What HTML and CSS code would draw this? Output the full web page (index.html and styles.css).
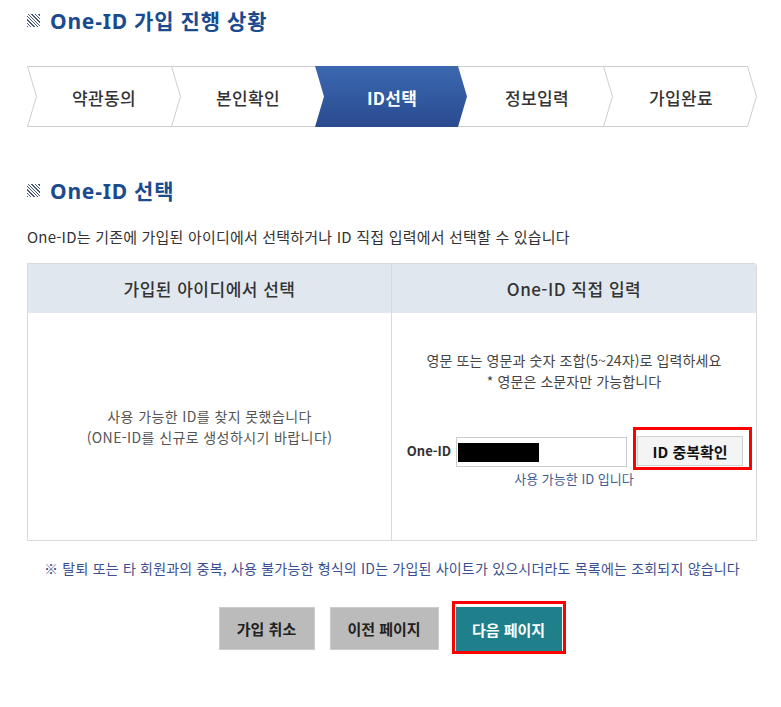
FILE: index.html
```html
<!DOCTYPE html>
<html lang="ko">
<head>
    <meta charset="UTF-8">
    <title>One-ID 선택</title>
    <link rel="stylesheet" href="styles.css">
</head>
<body>
    <div class="page">
        <!-- 진행 상황 -->
        <h2 class="sec-title"><span class="hatch"></span>One-ID 가입 진행 상황</h2>

        <svg class="steps" width="731" height="61" viewBox="0 0 731 61">
            <defs>
                <linearGradient id="activeGrad" x1="0" y1="0" x2="0" y2="1">
                    <stop offset="0" stop-color="#3b69b0"/>
                    <stop offset="1" stop-color="#2a4a8f"/>
                </linearGradient>
            </defs>
            <polygon points="288,0 431,0 440,30.5 431,61 288,61 297,30.5" fill="url(#activeGrad)"/>
            <g fill="none" stroke="#cfcfcf" stroke-width="1">
                <path d="M0 0.5 H288 M431 0.5 H720.5 M0 60.5 H288 M431 60.5 H720.5"/>
                <path d="M0.5 0.5 L9.5 30.5 L0.5 60.5"/>
                <path d="M144.5 0.5 L153.5 30.5 L144.5 60.5"/>
                <path d="M576.5 0.5 L585.5 30.5 L576.5 60.5"/>
                <path d="M720.5 0.5 L729.5 30.5 L720.5 60.5"/>
            </g>
            <text class="step-text" x="77" y="31">약관동의</text>
            <text class="step-text" x="221" y="31">본인확인</text>
            <text class="step-text active" x="365" y="31">ID선택</text>
            <text class="step-text" x="510" y="31">정보입력</text>
            <text class="step-text" x="654" y="31">가입완료</text>
        </svg>

        <!-- One-ID 선택 -->
        <h2 class="sec-title sec-gap"><span class="hatch"></span>One-ID 선택</h2>
        <p class="desc">One-ID는 기존에 가입된 아이디에서 선택하거나 ID 직접 입력에서 선택할 수 있습니다</p>

        <div class="id-box">
            <div class="box-head">가입된 아이디에서 선택</div>
            <div class="box-head col-right">One-ID 직접 입력</div>

            <div class="box-body left-body">
                <p class="empty-msg">사용 가능한 ID를 찾지 못했습니다<br>(ONE-ID를 신규로 생성하시기 바랍니다)</p>
            </div>
            <div class="box-body col-right right-body">
                <p class="guide">영문 또는 영문과 숫자 조합(5~24자)로 입력하세요<br>* 영문은 소문자만 가능합니다</p>
                <div class="id-row">
                    <label class="id-label">One-ID</label>
                    <div class="id-input"><span class="masked"></span></div>
                    <div class="mark-box">
                        <button class="check-btn">ID 중복확인</button>
                    </div>
                </div>
                <p class="status">사용 가능한 ID 입니다</p>
            </div>
        </div>

        <p class="notice">※ 탈퇴 또는 타 회원과의 중복, 사용 불가능한 형식의 ID는 가입된 사이트가 있으시더라도 목록에는 조회되지 않습니다</p>

        <div class="btns">
            <button class="btn btn-gray">가입 취소</button>
            <button class="btn btn-gray">이전 페이지</button>
            <div class="mark-box next-mark">
                <button class="btn btn-next">다음 페이지</button>
            </div>
        </div>
    </div>
</body>
</html>
```

FILE: styles.css
```css
:root {
    --title-color: #1b4b8f;
    --line-color: #d9d9d9;
    --head-bg: #e1e7ee;
    --teal: #1f7f8b;
    --mark-red: #ff0000;
}

body {
    margin: 0;
    background: #fff;
    font-family: "Noto Sans CJK KR", sans-serif;
    color: #333;
}

.page {
    width: 730px;
    padding: 6px 0 40px 27px;
}

/* 섹션 제목 */
.sec-title {
    display: flex;
    align-items: center;
    margin: 0;
    height: 28px;
    font-family: "Noto Sans", "Noto Sans CJK KR", sans-serif;
    font-size: 21px;
    font-weight: 700;
    letter-spacing: 0.8px;
    color: var(--title-color);
}

.sec-gap {
    margin-top: 49px;
}

.hatch {
    width: 13px;
    height: 13px;
    margin-right: 10px;
    background: repeating-linear-gradient(45deg, #4b5a78 0 1px, #fff 1px 2.4px);
}

/* 진행 단계 */
.steps {
    display: block;
    margin-top: 32px;
}

.step-text {
    font-family: "Noto Sans CJK KR", sans-serif;
    font-size: 17px;
    font-weight: 500;
    letter-spacing: 0.3px;
    fill: #333;
    text-anchor: middle;
    dominant-baseline: central;
}

.step-text.active {
    font-weight: 700;
    fill: #fff;
}

.desc {
    margin: 23px 0 0;
    font-size: 15px;
    line-height: 20px;
    letter-spacing: 0.2px;
    color: #333;
}

/* 선택 박스 */
.id-box {
    display: grid;
    grid-template-columns: 363px 1fr;
    margin-top: 16px;
    border: 1px solid var(--line-color);
    border-radius: 0 3px 0 0;
}

.box-head {
    height: 49px;
    display: flex;
    align-items: center;
    justify-content: center;
    background: var(--head-bg);
    font-size: 17px;
    font-weight: 500;
    letter-spacing: 0.5px;
    color: #333;
}

.col-right {
    border-left: 1px solid var(--line-color);
}

.box-body {
    height: 227px;
}

.left-body {
    display: flex;
    align-items: center;
    justify-content: center;
}

.empty-msg {
    margin: 0;
    text-align: center;
    font-size: 14px;
    line-height: 21px;
    letter-spacing: 0.4px;
    color: #555;
}

.right-body {
    padding-top: 37px;
    box-sizing: border-box;
    text-align: center;
}

.guide {
    margin: 0;
    font-size: 14px;
    line-height: 21px;
    letter-spacing: 0.1px;
    color: #444;
}

.id-row {
    display: flex;
    align-items: flex-end;
    justify-content: center;
    margin-top: 35px;
    padding-left: 11px;
}

.id-label {
    margin: 0 5px 4px 0;
    line-height: 30px;
    font-size: 13px;
    font-weight: 700;
    color: #333;
}

.id-input {
    width: 171px;
    height: 30px;
    margin-bottom: 3px;
    padding: 5px 1px;
    box-sizing: border-box;
    border: 1px solid #ccc;
    text-align: left;
}

.masked {
    display: block;
    width: 81px;
    height: 19px;
    background: #000;
}

.mark-box {
    border: 3px solid var(--mark-red);
    padding: 6px 6px 1px 1px;
    margin-left: 6px;
}

.check-btn {
    display: block;
    width: 106px;
    height: 30px;
    padding: 0;
    background: #f4f4f4;
    border: 1px solid #d0d0d0;
    font-family: "Noto Sans CJK KR", sans-serif;
    font-size: 15px;
    font-weight: 700;
    color: #111;
}

.status {
    margin: 0;
    font-size: 13px;
    line-height: 18px;
    color: #3d5d96;
}

.notice {
    margin: 17px 0 0;
    text-align: center;
    font-size: 14px;
    line-height: 20px;
    letter-spacing: 0.2px;
    color: #3a4f93;
}

/* 하단 버튼 */
.btns {
    display: flex;
    align-items: flex-start;
    justify-content: center;
    margin-top: 23px;
}

.btn {
    height: 43px;
    padding: 0;
    font-family: "Noto Sans CJK KR", sans-serif;
    font-size: 15px;
    font-weight: 700;
    cursor: pointer;
}

.btn-gray {
    width: 96px;
    margin-top: 6px;
    margin-right: 15px;
    background: #bbb;
    border: 1px solid #ccc;
    color: #222;
}

.btn-gray + .btn-gray {
    width: 109px;
    margin-right: 13px;
}

.next-mark {
    margin-left: 0;
    padding: 3px 1px 0 1px;
}

.btn-next {
    display: block;
    width: 106px;
    height: 44px;
    background: var(--teal);
    border: none;
    color: #fff;
}
```
